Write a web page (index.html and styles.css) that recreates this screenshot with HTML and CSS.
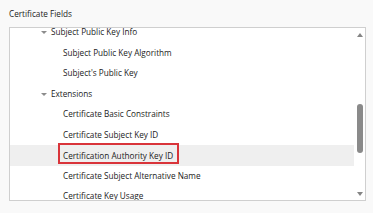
FILE: index.html
```html
<!DOCTYPE html>
<html lang="en">
<head>
    <meta charset="UTF-8">
    <title>Certificate Fields</title>
    <link rel="stylesheet" href="styles.css">
</head>
<body>
    <div class="label">Certificate Fields</div>

    <div class="tree-box">
        <div class="tree">
            <div class="row lvl1"><span class="caret"></span>Subject Public Key Info</div>
            <div class="row lvl2">Subject Public Key Algorithm</div>
            <div class="row lvl2">Subject's Public Key</div>
            <div class="row lvl1"><span class="caret"></span>Extensions</div>
            <div class="row lvl2">Certificate Basic Constraints</div>
            <div class="row lvl2">Certificate Subject Key ID</div>
            <div class="row lvl2 selected"><span class="mark">Certification Authority Key ID</span></div>
            <div class="row lvl2">Certificate Subject Alternative Name</div>
            <div class="row lvl2">Certificate Key Usage</div>
        </div>
        <div class="scrollbar">
            <span class="arrow up"></span>
            <div class="track"><div class="thumb"></div></div>
            <span class="arrow down"></span>
        </div>
    </div>
</body>
</html>
```

FILE: styles.css
```css
body {
    margin: 0;
    background: #f9f9f9;
    font-family: "Open Sans", "Noto Sans", sans-serif;
    font-size: 8.2px;
    color: #1b1b1b;
}
.label {
    padding: 8px 0 0 9px;
    height: 19px;
}
.tree-box {
    margin-left: 9px;
    width: 355px;
    height: 172px;
    border: 1px solid #cfcfcf;
    background: #fff;
    display: flex;
    overflow: hidden;
}
.tree {
    flex: 1;
    margin-top: -6px;
}
.row {
    height: 20.5px;
    line-height: 20.5px;
    white-space: nowrap;
}
.lvl1 {
    padding-left: 31px;
}
.lvl2 {
    padding-left: 53px;
}
.caret {
    display: inline-block;
    width: 0;
    height: 0;
    border-left: 3px solid transparent;
    border-right: 3px solid transparent;
    border-top: 3px solid #8c8c8c;
    margin-right: 4px;
    vertical-align: middle;
}
.selected {
    background: #efefef;
}
.mark {
    display: inline-block;
    line-height: 12px;
    padding: 5px 4px 0 3px;
    margin-left: -3px;
    outline: 2px solid #d9343a;
    vertical-align: baseline;
}
.scrollbar {
    width: 11px;
    display: flex;
    flex-direction: column;
    align-items: center;
    padding: 5px 0 4px;
}
.arrow {
    width: 0;
    height: 0;
    border-left: 3px solid transparent;
    border-right: 3px solid transparent;
}
.arrow.up {
    border-bottom: 4px solid #858585;
}
.arrow.down {
    border-top: 4px solid #858585;
}
.track {
    flex: 1;
    width: 100%;
    display: flex;
    justify-content: center;
}
.thumb {
    width: 6px;
    height: 49px;
    margin-top: 67px;
    border-radius: 3px;
    background: #8a8a8a;
}
```
